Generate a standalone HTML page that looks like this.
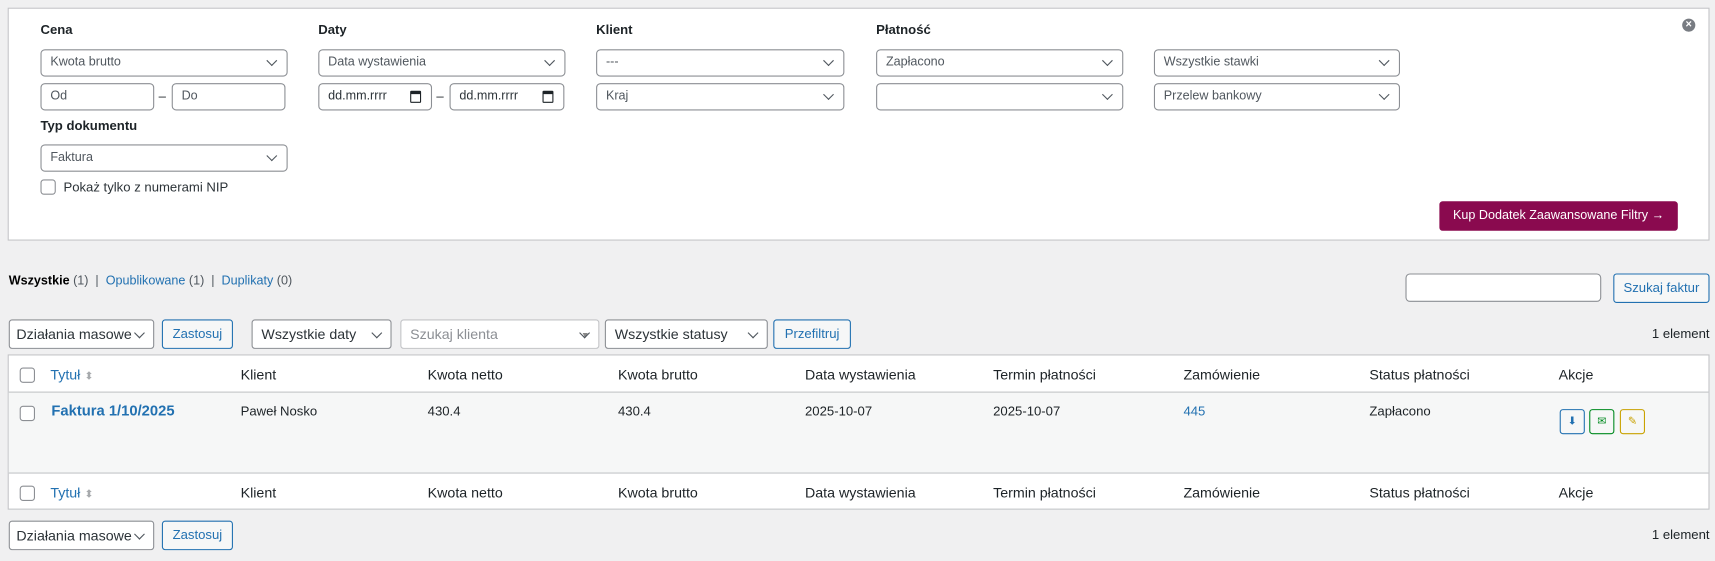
<!DOCTYPE html>
<html><head><meta charset="utf-8"><style>
*{box-sizing:border-box}
body{margin:0;width:1715px;height:561px;background:#f0f0f1;font-family:"Liberation Sans",Arial,sans-serif;font-size:13px;color:#1d2327;position:relative;overflow:hidden}
#w{position:absolute;left:0;top:0;width:1568px;height:513px;transform:scale(1.09375);transform-origin:0 0}
.a{position:absolute}
.panel{left:7px;top:7px;width:1556px;height:213px;background:#fff;border:1px solid #c3c4c7}
.lbl{font-weight:bold;font-size:12px;color:#1d2327}
.sel,.inp{position:absolute;background:#fff;border:1px solid #8c8f94;border-radius:4px;height:25px;font-size:11.5px;color:#50575e;padding:5px 8px;line-height:13px}
.sel:after{content:"";position:absolute;right:10px;top:6px;width:6px;height:6px;border-right:1.6px solid #50575e;border-bottom:1.6px solid #50575e;transform:rotate(45deg)}
.cal{position:absolute;right:9px;top:6px;width:10px;height:11px;border:1.5px solid #1d2327;border-top-width:3px;border-radius:1px}
.btn{position:absolute;border:1px solid #2271b1;color:#2271b1;background:#f6f7f7;border-radius:3px;font-size:12px;text-align:center;height:27px;line-height:25px}
.tsel{position:absolute;background:#fff;border:1px solid #8c8f94;border-radius:3px;height:27px;font-size:13px;padding:4px 8px;line-height:17px;color:#2c3338;white-space:nowrap}
.tsel:after{content:"";position:absolute;right:9px;top:8px;width:6px;height:6px;border-right:1.4px solid #50575e;border-bottom:1.4px solid #50575e;transform:rotate(45deg)}
.cb{position:absolute;width:14px;height:14px;border:1px solid #8c8f94;border-radius:3px;background:#fff}
.th{position:absolute;font-size:13px;color:#1d2327}
a{color:#2271b1;text-decoration:none}
.ic{position:absolute;width:23px;height:23px;border-radius:3px;border:1px solid}
</style></head><body><div id="w">
<div class="a panel"></div>
<div class="a lbl" style="left:37px;top:20px">Cena</div>
<div class="a lbl" style="left:291px;top:20px">Daty</div>
<div class="a lbl" style="left:545px;top:20px">Klient</div>
<div class="a lbl" style="left:801px;top:20px">Płatność</div>
<div class="sel" style="left:37px;top:45px;width:226px">Kwota brutto</div>
<div class="sel" style="left:291px;top:45px;width:226px">Data wystawienia</div>
<div class="sel" style="left:545px;top:45px;width:227px">---</div>
<div class="sel" style="left:801px;top:45px;width:226px">Zapłacono</div>
<div class="sel" style="left:1055px;top:45px;width:225px">Wszystkie stawki</div>
<div class="inp" style="left:37px;top:76px;width:104px">Od</div>
<div class="a" style="left:145px;top:81px;font-size:12px">–</div>
<div class="inp" style="left:157px;top:76px;width:104px">Do</div>
<div class="inp" style="left:291px;top:76px;width:104px;color:#2c3338">dd.mm.rrrr<span class="cal"></span></div>
<div class="a" style="left:399px;top:81px;font-size:12px">–</div>
<div class="inp" style="left:411px;top:76px;width:105px;color:#2c3338">dd.mm.rrrr<span class="cal"></span></div>
<div class="sel" style="left:545px;top:76px;width:227px">Kraj</div>
<div class="sel" style="left:801px;top:76px;width:226px"></div>
<div class="sel" style="left:1055px;top:76px;width:225px">Przelew bankowy</div>
<div class="a lbl" style="left:37px;top:108px">Typ dokumentu</div>
<div class="sel" style="left:37px;top:132px;width:226px">Faktura</div>
<div class="cb" style="left:37px;top:164px"></div>
<div class="a" style="left:58px;top:164px;font-size:12px;color:#2c3338">Pokaż tylko z numerami NIP</div>
<div class="a" style="left:1538px;top:17px;width:12px;height:12px;border-radius:50%;background:#787c82;color:#fff;font-size:10px;line-height:12px;text-align:center;font-weight:bold">×</div>
<div class="a" style="left:1316px;top:184px;width:218px;height:27px;background:#8a0a4f;border-radius:3px;color:#fff;font-size:11.5px;text-align:center;line-height:27px">Kup Dodatek Zaawansowane Filtry →</div>

<div class="a" style="left:8px;top:251px;font-size:11.5px;color:#50575e"><b style="color:#000">Wszystkie</b> (1) &nbsp;|&nbsp; <a>Opublikowane</a> (1) &nbsp;|&nbsp; <a>Duplikaty</a> (0)</div>
<div class="a" style="left:1285px;top:250px;width:179px;height:26px;background:#fff;border:1px solid #8c8f94;border-radius:4px"></div>
<div class="btn" style="left:1475px;top:250px;width:88px;height:27px">Szukaj faktur</div>

<div class="tsel" style="left:8px;top:292px;width:133px;padding-left:6px">Działania masowe</div>
<div class="btn" style="left:148px;top:292px;width:65px">Zastosuj</div>
<div class="tsel" style="left:230px;top:292px;width:128px">Wszystkie daty</div>
<div class="tsel" style="left:366px;top:292px;width:182px;color:#8c8f94;border-color:#c3c4c7">Szukaj klienta<span style="position:absolute;right:8px;top:5px;font-size:8px;color:#888">▼</span></div>
<div class="tsel" style="left:553px;top:292px;width:149px">Wszystkie statusy</div>
<div class="btn" style="left:707px;top:292px;width:71px">Przefiltruj</div>
<div class="a" style="left:1480px;top:298px;width:83px;text-align:right;font-size:12px">1 element</div>

<div class="a" style="left:7px;top:324px;width:1556px;height:142px;background:#fff;border:1px solid #c3c4c7"></div>
<div class="a" style="left:8px;top:358px;width:1554px;height:75px;background:#f6f7f7;border-top:1px solid #c3c4c7;border-bottom:1px solid #c3c4c7"></div>

<div class="cb" style="left:18px;top:336px"></div>
<div class="th" style="left:46px;top:335px"><a>Tytuł</a> <span style="color:#a7aaad;font-size:10px">⬍</span></div>
<div class="th" style="left:220px;top:335px">Klient</div>
<div class="th" style="left:391px;top:335px">Kwota netto</div>
<div class="th" style="left:565px;top:335px">Kwota brutto</div>
<div class="th" style="left:736px;top:335px">Data wystawienia</div>
<div class="th" style="left:908px;top:335px">Termin płatności</div>
<div class="th" style="left:1082px;top:335px">Zamówienie</div>
<div class="th" style="left:1252px;top:335px">Status płatności</div>
<div class="th" style="left:1425px;top:335px">Akcje</div>

<div class="cb" style="left:18px;top:371px"></div>
<div class="a" style="left:47px;top:368px;font-size:13.5px;font-weight:bold;color:#2271b1">Faktura 1/10/2025</div>
<div class="a" style="left:220px;top:369px;font-size:12px">Paweł Nosko</div>
<div class="a" style="left:391px;top:369px;font-size:12px">430.4</div>
<div class="a" style="left:565px;top:369px;font-size:12px">430.4</div>
<div class="a" style="left:736px;top:369px;font-size:12px">2025-10-07</div>
<div class="a" style="left:908px;top:369px;font-size:12px">2025-10-07</div>
<div class="a" style="left:1082px;top:369px;font-size:12px;color:#2271b1">445</div>
<div class="a" style="left:1252px;top:369px;font-size:12px">Zapłacono</div>
<div class="ic" style="left:1426px;top:374px;border-color:#2271b1;color:#2271b1;font-size:10px;text-align:center;line-height:21px">⬇</div>
<div class="ic" style="left:1453px;top:374px;border-color:#008a20;color:#008a20;font-size:10px;text-align:center;line-height:21px">✉</div>
<div class="ic" style="left:1481px;top:374px;border-color:#c9a200;color:#c9a200;font-size:10px;text-align:center;line-height:21px">✎</div>

<div class="cb" style="left:18px;top:444px"></div>
<div class="th" style="left:46px;top:443px"><a>Tytuł</a> <span style="color:#a7aaad;font-size:10px">⬍</span></div>
<div class="th" style="left:220px;top:443px">Klient</div>
<div class="th" style="left:391px;top:443px">Kwota netto</div>
<div class="th" style="left:565px;top:443px">Kwota brutto</div>
<div class="th" style="left:736px;top:443px">Data wystawienia</div>
<div class="th" style="left:908px;top:443px">Termin płatności</div>
<div class="th" style="left:1082px;top:443px">Zamówienie</div>
<div class="th" style="left:1252px;top:443px">Status płatności</div>
<div class="th" style="left:1425px;top:443px">Akcje</div>

<div class="tsel" style="left:8px;top:476px;width:133px;padding-left:6px">Działania masowe</div>
<div class="btn" style="left:148px;top:476px;width:65px">Zastosuj</div>
<div class="a" style="left:1480px;top:482px;width:83px;text-align:right;font-size:12px">1 element</div>
</div></body></html>
